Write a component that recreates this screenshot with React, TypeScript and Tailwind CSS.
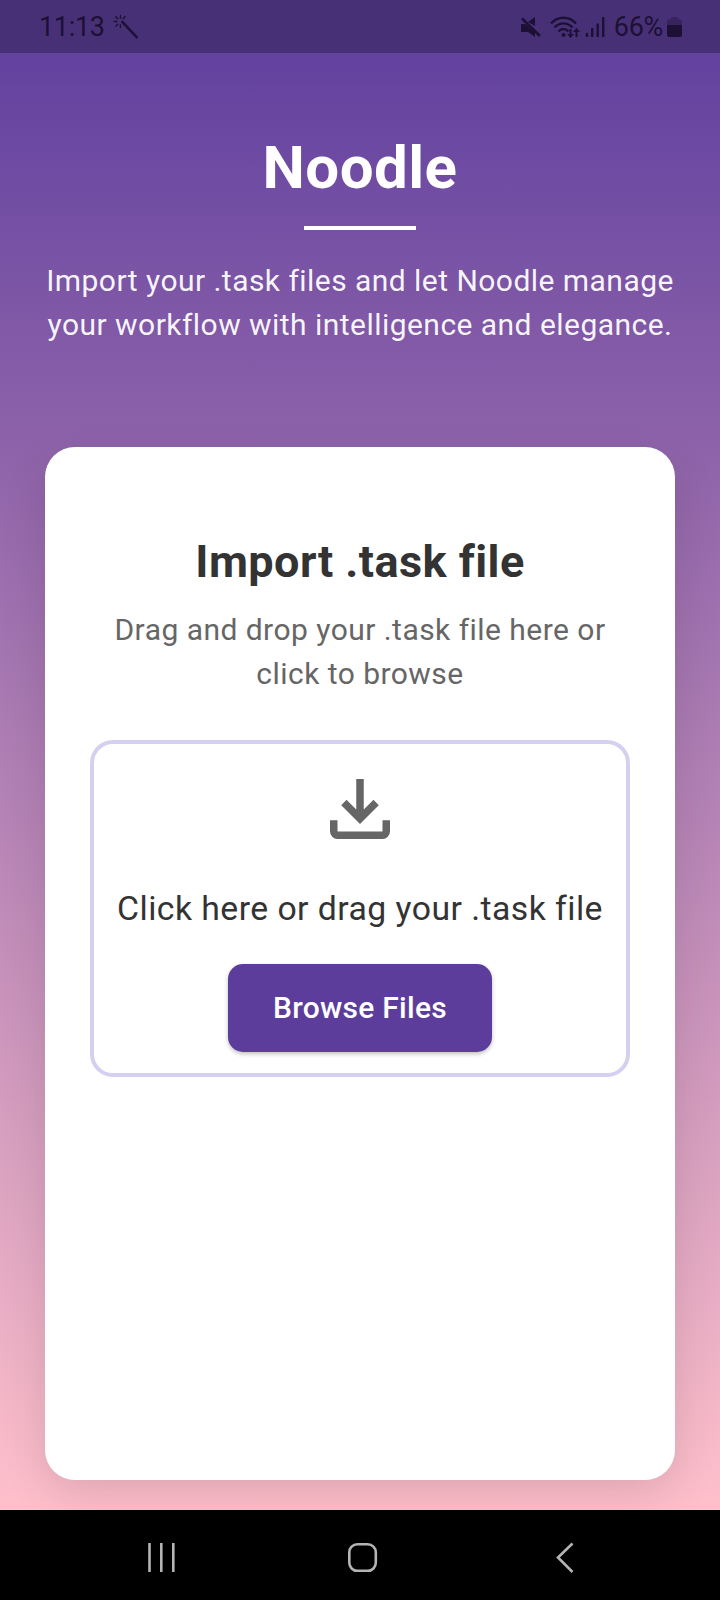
import React from "react";

function StatusBar() {
  return (
    <div className="flex h-[53px] shrink-0 items-center bg-[#483077] pl-[39px] pr-[38px] text-[#1c1035]">
      <span className="w-[66px] text-[27px] leading-[54px] tracking-[-0.3px]">11:13</span>
      <svg className="ml-[8px] h-[26px] w-[26px]" viewBox="0 0 28 28" fill="none" stroke="currentColor" strokeLinecap="round">
        <path d="M10 8.5L25.5 25" strokeWidth="2.8" />
        <path d="M8 1.500v3M3 3l2.200 2.200M1.200 8h3M3.200 13l2-2M8 11.500v3M13 3l-2 2" strokeWidth="1.500" />
      </svg>
      <div className="ml-auto flex items-center">
        <svg className="h-[24px] w-[22px]" viewBox="0 0 22 24">
          <path d="M8 7l7-5v9zM1 9h4l10 8v5l-7-5H1z" fill="currentColor" />
          <path d="M2 3.500L20 21" stroke="currentColor" strokeWidth="2.600" />
        </svg>
        <svg className="ml-[8px] h-[24px] w-[31px]" viewBox="0 0 31 24" fill="none" stroke="currentColor">
          <path d="M1 8.500C8 0.800 19 0.800 26 8.500M4.500 12.500c5-5.500 13-5.500 18 0M8.500 16.500c3-3.300 7-3.300 10 0" strokeWidth="2.400" />
          <circle cx="13.500" cy="20" r="2" fill="currentColor" stroke="none" />
          <path d="M20.500 14v7M26.500 22v-7" strokeWidth="2" />
          <path d="M17 19h7l-3.500 4zM23 17h7l-3.500-4z" fill="currentColor" stroke="none" />
        </svg>
        <svg className="ml-[4px] h-[22px] w-[20px]" viewBox="0 0 20 22" stroke="currentColor" strokeWidth="2.400">
          <path d="M2 17v4M7.200 12v9M12.700 7.500V21" />
          <path d="M18.200 1v20" />
        </svg>
        <span className="ml-[9px] text-[27px] leading-[54px] tracking-[-0.3px]">66%</span>
        <svg className="ml-[4px] h-[22px] w-[15px]" viewBox="0 0 15 22">
          <path d="M4 1h7v2h2l2 2v5H0V5l2-2h2z" fill="#38235f" />
          <path d="M0 9h15v10q0 2-2 2H2q-2 0-2-2z" fill="currentColor" />
        </svg>
      </div>
    </div>
  );
}

function ImportCard() {
  return (
    <section className="mx-[45px] flex h-[1033px] flex-col rounded-[30px] bg-white px-[45px] pt-[88px] text-center shadow-[0_15px_45px_rgba(0,0,0,0.12)]">
      <h2 className="text-[45px] font-bold leading-[54px] tracking-[0.45px] text-[#333333]">Import .task file</h2>
      <p className="mt-[19px] text-[30px] leading-[44px] tracking-[0.46px] text-[#666666]">
        Drag and drop your .task file here or
        <br />
        click to browse
      </p>
      <div className="mt-[44px] flex h-[337px] flex-col items-center rounded-[23px] border-4 border-[#d6d0f0] pt-[20px]">
        <svg className="h-[90px] w-[90px]" viewBox="0 0 24 24" fill="#666666">
          <path d="M12 16l-5-5 1.400-1.450 2.600 2.600V4h2v8.150l2.600-2.600L17 11zM6 20q-.825 0-1.412-.587Q4 18.825 4 18v-3h2v3h12v-3h2v3q0 .825-.587 1.413Q18.825 20 18 20z" />
        </svg>
        <p className="mt-[33px] whitespace-nowrap text-[33.75px] leading-[44px] tracking-[0.45px] text-[#333333]">
          Click here or drag your .task file
        </p>
        <button className="mt-[33px] h-[88px] w-[264px] rounded-[15px] bg-[#5c3d9b] pb-[2px] text-[30px] font-medium tracking-[0.27px] text-white shadow-[0_2px_4px_rgba(0,0,0,0.25)]">
          Browse Files
        </button>
      </div>
    </section>
  );
}

function NavigationBar() {
  return (
    <nav className="flex h-[90px] shrink-0 items-center bg-black">
      <svg className="h-[90px] w-[720px]" viewBox="0 0 720 90" fill="none" stroke="#b4b4b4" strokeWidth="2.600">
        <path d="M149.500 33v29M161.300 33v29M173.300 33v29" />
        <rect x="349.300" y="34.300" width="26.500" height="26.500" rx="8" />
        <path d="M572.500 33.500L558 47.500l14.500 14.500" />
      </svg>
    </nav>
  );
}

export default function App() {
  return (
    <div className="flex h-[1600px] w-[720px] flex-col overflow-hidden bg-black font-['Roboto',sans-serif]">
      <main className="flex h-[1510px] shrink-0 flex-col overflow-hidden bg-[linear-gradient(180deg,#5c3d9e_0px,#8e63aa_450px,#ffc0cb_1510px)]">
        <StatusBar />
        <header className="flex h-[394px] shrink-0 flex-col items-center pt-[80px] text-center text-white">
          <h1 className="text-[60px] font-bold leading-[70px] tracking-[0.45px]">Noodle</h1>
          <div className="mt-[23px] h-[4px] w-[112px] bg-white" />
          <p className="mt-[29px] whitespace-nowrap text-[30px] leading-[44px] tracking-[0.46px] text-white/95">
            Import your .task files and let Noodle manage
            <br />
            your workflow with intelligence and elegance.
          </p>
        </header>
        <ImportCard />
      </main>
      <NavigationBar />
    </div>
  );
}
